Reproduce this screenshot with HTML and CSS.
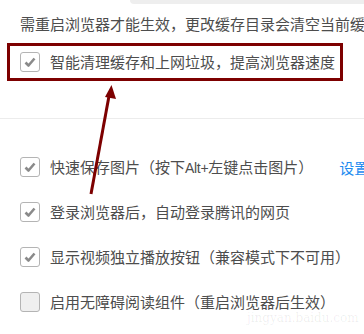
FILE: index.html
```html
<!DOCTYPE html>
<html lang="zh-CN">
<head>
<meta charset="utf-8">
<link rel="stylesheet" href="styles.css">
</head>
<body>
<div class="page">
  <div class="topbar"></div>
  <p class="note">需重启浏览器才能生效，更改缓存目录会清空当前缓存</p>
  <div class="highlight">
    <label class="option">
      <span class="cb checked"><svg viewBox="0 0 20 20" width="20" height="20"><path d="M5.5 10.5 L8.5 13.5 L14.5 6.5" fill="none" stroke="#8a8a8a" stroke-width="2.6" stroke-linejoin="round"/></svg></span>
      <span class="label">智能清理缓存和上网垃圾，提高浏览器速度</span>
    </label>
  </div>
  <hr class="sep">
  <div class="options">
    <label class="option">
      <span class="cb checked"><svg viewBox="0 0 20 20" width="20" height="20"><path d="M5.5 10.5 L8.5 13.5 L14.5 6.5" fill="none" stroke="#8a8a8a" stroke-width="2.6" stroke-linejoin="round"/></svg></span>
      <span class="label">快速保存图片（按下<span class="latin">Alt+</span>左键点击图片）</span>
      <a class="link">设置</a>
    </label>
    <label class="option">
      <span class="cb checked"><svg viewBox="0 0 20 20" width="20" height="20"><path d="M5.5 10.5 L8.5 13.5 L14.5 6.5" fill="none" stroke="#8a8a8a" stroke-width="2.6" stroke-linejoin="round"/></svg></span>
      <span class="label">登录浏览器后，自动登录腾讯的网页</span>
    </label>
    <label class="option">
      <span class="cb checked"><svg viewBox="0 0 20 20" width="20" height="20"><path d="M5.5 10.5 L8.5 13.5 L14.5 6.5" fill="none" stroke="#8a8a8a" stroke-width="2.6" stroke-linejoin="round"/></svg></span>
      <span class="label">显示视频独立播放按钮（兼容模式下不可用）</span>
    </label>
    <label class="option">
      <span class="cb empty"></span>
      <span class="label">启用无障碍阅读组件（重启浏览器后生效）</span>
    </label>
  </div>
  <svg class="arrow" width="364" height="334" viewBox="0 0 364 334">
    <line x1="91" y1="194" x2="109" y2="96" stroke="#7d0000" stroke-width="3"/>
    <polygon points="111.5,85 116,99 105,97" fill="#7d0000"/>
  </svg>
  <div class="watermark">jingyan.baidu.com</div>
</div>
</body>
</html>
```
FILE: styles.css
```css
html, body {
  margin: 0;
  padding: 0;
  background: #fff;
  overflow: hidden;
}
.page {
  position: relative;
  width: 364px;
  height: 334px;
  overflow: hidden;
  font-family: "Noto Sans CJK SC", "Noto Sans", sans-serif;
  font-size: 15px;
  color: #4d4d4d;
  white-space: nowrap;
}
.topbar {
  height: 4px;
  margin-left: 130px;
  background: #eeeeee;
  border-bottom-left-radius: 4px;
}
.note {
  margin: 0;
  padding-left: 20px;
  height: 39px;
  line-height: 40px;
}
.highlight {
  box-sizing: border-box;
  width: 336px;
  height: 38px;
  margin-left: 7px;
  border: 3px solid #7d0000;
  display: flex;
  align-items: center;
  padding-left: 10px;
}
.option {
  display: flex;
  align-items: center;
  gap: 10px;
  height: 20px;
}
.cb {
  box-sizing: border-box;
  flex: none;
  width: 20px;
  height: 20px;
  border: 1px solid #b4b4b4;
  border-radius: 3px;
  background: #fff;
  display: flex;
  align-items: center;
  justify-content: center;
}
.cb svg {
  display: block;
  margin: -1px;
}
.cb.empty {
  background: #efefef;
}
.label {
  line-height: 20px;
}
.latin {
  font-family: "Liberation Sans", sans-serif;
  font-size: 14px;
  letter-spacing: -0.3px;
}
.link {
  color: #1e8cf0;
  margin-left: 16px;
}
.sep {
  margin: 37px 0 0 0;
  border: 0;
  border-top: 1px solid #ececec;
  height: 0;
}
.options {
  display: flex;
  flex-direction: column;
  gap: 25px;
  padding-left: 20px;
  padding-top: 38px;
}
.arrow {
  position: absolute;
  left: 0;
  top: 0;
  pointer-events: none;
}
.watermark {
  position: absolute;
  left: 247px;
  top: 311px;
  font-family: "DejaVu Serif", serif;
  font-size: 12px;
  color: rgba(0, 0, 0, 0.07);
}
```
